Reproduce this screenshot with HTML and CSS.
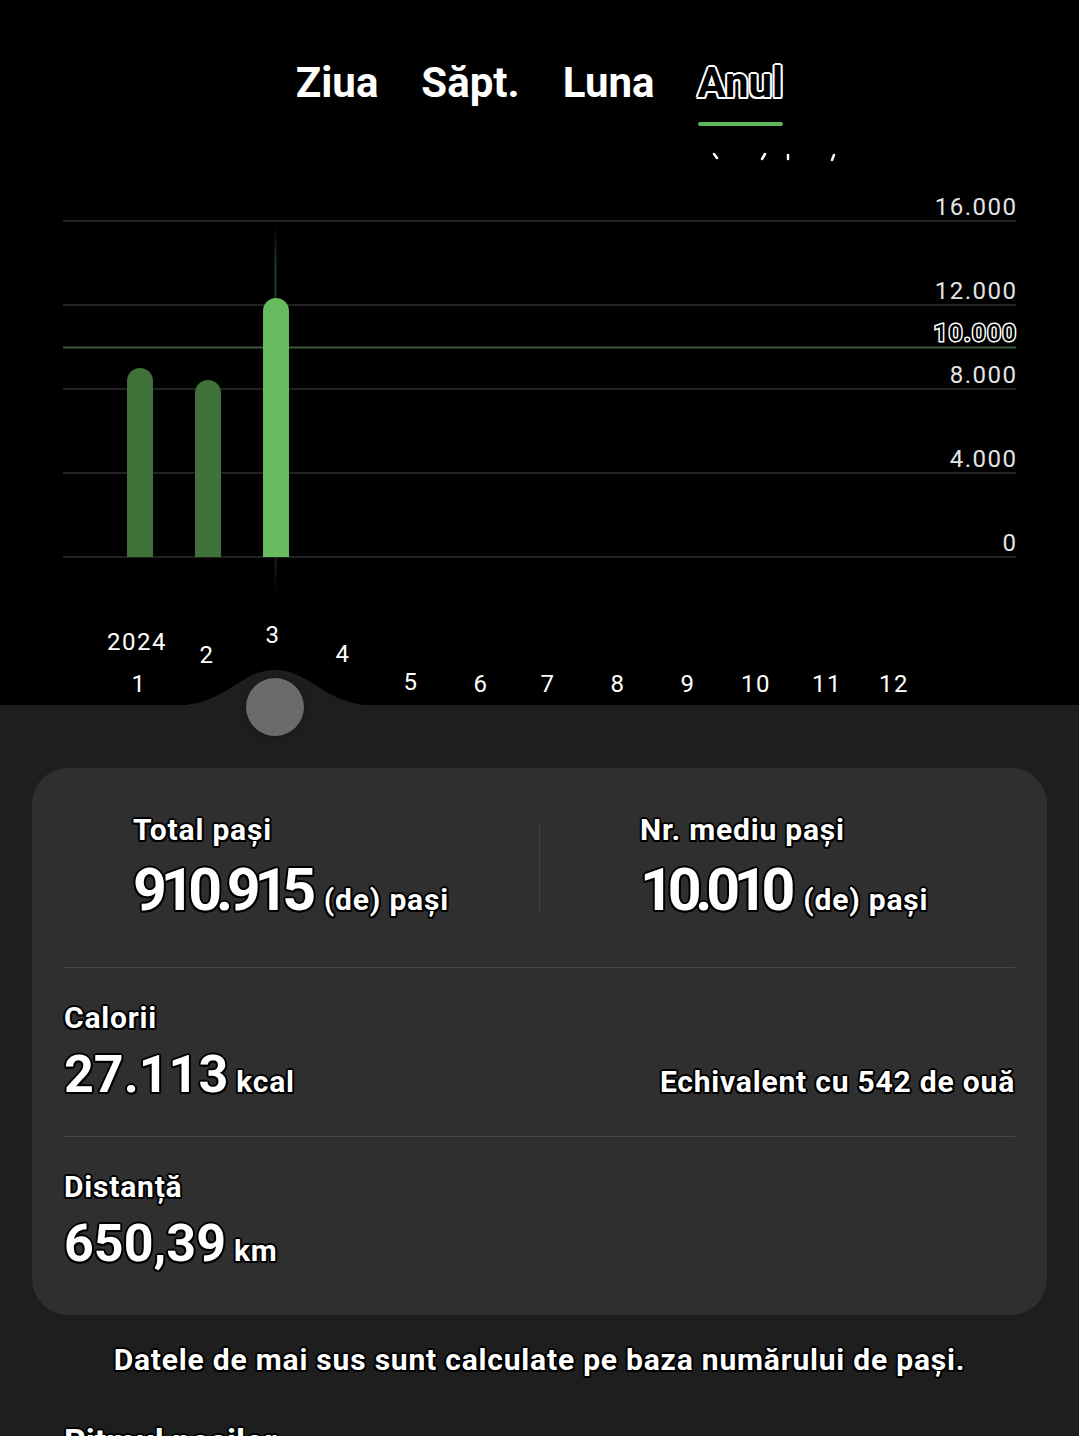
FILE: index.html
```html
<!DOCTYPE html>
<html>
  <head>
    <meta charset="utf-8" />
    <link rel="stylesheet" href="styles.css">
  </head>
  <body>
    <div class="top">
      <div class="tabs">
        <div class="tab">Ziua</div>
        <div class="tab">Săpt.</div>
        <div class="tab">Luna</div>
        <div class="tab active">Anul</div>
      </div>

      <div class="chart">
        <svg class="chart-svg" width="1079" height="565" viewBox="0 0 1079 565">
          <defs>
            <linearGradient id="cursor" x1="0" y1="0" x2="0" y2="1">
              <stop offset="0" stop-color="#1d3a1d" stop-opacity="0" />
              <stop offset="0.1" stop-color="#1d3a1d" />
              <stop offset="0.85" stop-color="#1d3a1d" />
              <stop offset="1" stop-color="#1d3a1d" stop-opacity="0" />
            </linearGradient>
          </defs>

          <!-- clipped marks of the label above the chart -->
          <g stroke="#fff" stroke-width="2.5" stroke-linecap="round">
            <path d="M714 14 L717 18" />
            <path d="M765 14 L762 19" />
            <path d="M788 15 L788 19" />
            <path d="M834 15 L832 20" />
          </g>

          <g class="grid">
            <line x1="63" y1="81" x2="1016" y2="81" />
            <line x1="63" y1="165" x2="1016" y2="165" />
            <line x1="63" y1="249" x2="1016" y2="249" />
            <line x1="63" y1="333" x2="1016" y2="333" />
            <line x1="63" y1="417" x2="1016" y2="417" />
          </g>
          <line x1="63" y1="207.5" x2="1016" y2="207.5" stroke="#3b5b38" stroke-width="2" />

          <rect x="274.5" y="85" width="2" height="370" fill="url(#cursor)" />

          <path d="M127 417 V241 a13 13 0 0 1 26 0 V417 Z" fill="#3f7238" />
          <path d="M195 417 V253 a13 13 0 0 1 26 0 V417 Z" fill="#3f7238" />
          <path d="M263 417 V171 a13 13 0 0 1 26 0 V417 Z" fill="#66bb5f" />

          <g class="y-labels">
            <text x="1017.5" y="75">16.000</text>
            <text x="1017.5" y="159">12.000</text>
            <text x="1017.5" y="201" class="goal">10.000</text>
            <text x="1017.5" y="243">8.000</text>
            <text x="1017.5" y="327">4.000</text>
            <text x="1017.5" y="411">0</text>
          </g>

          <g class="x-labels">
            <text x="137" y="510">2024</text>
            <text x="139" y="552">1</text>
            <text x="207" y="523">2</text>
            <text x="273" y="503">3</text>
            <text x="343" y="522">4</text>
            <text x="411" y="550">5</text>
            <text x="481" y="552">6</text>
            <text x="548" y="552">7</text>
            <text x="618" y="552">8</text>
            <text x="688" y="552">9</text>
            <text x="756" y="552">10</text>
            <text x="827" y="552">11</text>
            <text x="894" y="552">12</text>
          </g>

          <path d="M170 566 C228 566 238 530 275 530 C312 530 322 566 380 566 Z" fill="#1e1e1e" />
        </svg>
        <div class="knob"></div>
      </div>
    </div>

    <div class="stats">
      <div class="card">
        <div class="card-top">
          <div class="half">
            <div class="label">Total pași</div>
            <div class="value">
              <span class="num narrow">910.915</span>
              <span class="unit">(de) pași</span>
            </div>
          </div>
          <div class="vdivider"></div>
          <div class="half">
            <div class="label">Nr. mediu pași</div>
            <div class="value">
              <span class="num narrow">10.010</span>
              <span class="unit">(de) pași</span>
            </div>
          </div>
        </div>

        <div class="row">
          <div class="label">Calorii</div>
          <div class="value-line">
            <div class="value">
              <span class="num">27.113</span><span class="unit small">kcal</span>
            </div>
            <div class="equiv">Echivalent cu 542 de ouă</div>
          </div>
        </div>

        <div class="row last">
          <div class="label">Distanță</div>
          <div class="value">
            <span class="num">650,39</span><span class="unit small">km</span>
          </div>
        </div>
      </div>

      <div class="note">Datele de mai sus sunt calculate pe baza numărului de pași.</div>

      <div class="next-title">Ritmul pașilor</div>
    </div>
  </body>
</html>
```

FILE: styles.css
```css
body {
  margin: 0;
  font-family: Roboto, 'Noto Sans', sans-serif;
  background: #1e1e1e;
  color: #fff;
  overflow: hidden;
}

.top {
  background: #000;
}

.tabs {
  display: flex;
  justify-content: center;
  align-items: flex-start;
  gap: 43px;
  padding: 58px 0 14px;
}

.tab {
  display: flex;
  flex-direction: column;
  font-size: 42px;
  line-height: 50px;
  font-weight: bold;
}

.tab.active {
  color: #000;
  text-shadow: -2px 0 #fff, 2px 0 #fff, 0 -2px #fff, 0 2px #fff,
    -1.5px -1.5px #fff, 1.5px -1.5px #fff, -1.5px 1.5px #fff, 1.5px 1.5px #fff;
}

.tab.active::after {
  content: '';
  height: 4px;
  margin-top: 14px;
  border-radius: 2px;
  background: #5db659;
}

.chart {
  position: relative;
  height: 565px;
}

.chart-svg {
  display: block;
}

.grid line {
  stroke: #222;
  stroke-width: 2;
}

.y-labels text {
  font-family: Roboto, sans-serif;
  font-size: 24px;
  letter-spacing: 1.5px;
  fill: #e4e4e4;
  text-anchor: end;
}

.y-labels .goal {
  fill: #000;
  stroke: #fff;
  stroke-width: 3px;
  paint-order: stroke;
  font-weight: 500;
}

.x-labels text {
  font-family: Roboto, sans-serif;
  font-size: 24px;
  letter-spacing: 1.5px;
  fill: #fff;
  text-anchor: middle;
}

/* scroll handle sitting on the bump */
.knob {
  position: absolute;
  left: 246px;
  top: 538px;
  width: 58px;
  height: 58px;
  border-radius: 50%;
  background: #6b6b6b;
  box-shadow: 0 0 6px rgba(0, 0, 0, 0.25);
}

.stats {
  padding: 63px 32px 0;
}

.card {
  background: #2f2f2f;
  border-radius: 36px;
  padding: 45px 0 42px;
}

.label,
.unit,
.num,
.equiv,
.note,
.next-title {
  text-shadow: -2px 0 #000, 2px 0 #000, 0 -2px #000, 0 2px #000,
    -1.5px -1.5px #000, 1.5px -1.5px #000, -1.5px 1.5px #000, 1.5px 1.5px #000;
}

.label {
  font-size: 30px;
  line-height: 34px;
  letter-spacing: 0.8px;
  font-weight: bold;
}

.value {
  margin-top: 11px;
  display: flex;
  align-items: baseline;
  gap: 10px;
  white-space: nowrap;
}

.num {
  font-size: 52px;
  line-height: 58px;
  font-weight: bold;
}

.num.narrow {
  font-size: 59px;
  line-height: 64px;
  letter-spacing: -6.2px;
  margin-right: 4px;
}

.unit {
  font-size: 30px;
  letter-spacing: 0.8px;
  font-weight: bold;
}

.card-top {
  display: grid;
  grid-template-columns: 1fr 1px 1fr;
  align-items: center;
}

.half {
  padding-left: 101px;
}

.half:last-child {
  padding-left: 100px;
}

.vdivider {
  height: 88px;
  background: #3e3e3e;
}

.row {
  margin: 45px 32px 0;
  padding: 33px 0 32px;
  border-top: 1px solid #474747;
}

.row.last {
  padding-bottom: 0;
}

.row + .row {
  margin-top: 0;
}

.value-line {
  display: flex;
  justify-content: space-between;
  align-items: baseline;
}

.value .unit.small {
  margin-left: -2px;
}

.equiv {
  font-size: 30px;
  letter-spacing: 0.8px;
  font-weight: bold;
}

.note {
  margin-top: 28px;
  text-align: center;
  font-size: 30px;
  line-height: 34px;
  letter-spacing: 0.8px;
  font-weight: bold;
}

.next-title {
  margin-top: 44px;
  padding-left: 32px;
  font-size: 34px;
  font-weight: bold;
}
```
